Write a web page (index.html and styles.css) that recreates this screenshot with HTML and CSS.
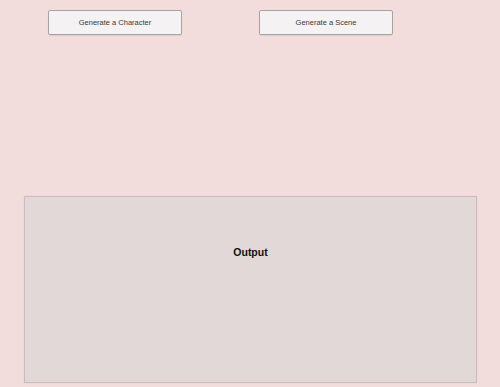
FILE: index.html
```html
<!DOCTYPE html>
<html lang="en">

<head>
    <meta charset="UTF-8">
    <meta name="viewport" content="width=device-width, initial-scale=1.0">
    <title>Generator</title>
    <link rel="stylesheet" href="styles.css">
</head>

<body>
    <div class="button-row">
        <button type="button" class="gen-btn">Generate a Character</button>
        <button type="button" class="gen-btn">Generate a Scene</button>
    </div>
    <div class="output-box">
        <h3 class="output-title">Output</h3>
    </div>
</body>

</html>
```

FILE: styles.css
```css
* {
    box-sizing: border-box;
}

body {
    margin: 0;
    padding: 0;
    height: 100vh;
    background-color: #f3dcdc;
    font-family: "Liberation Sans", Arial, sans-serif;
}

.button-row {
    display: flex;
    gap: 77px;
    padding: 10px 0 0 48px;
}

.gen-btn {
    width: 134px;
    height: 25px;
    background-color: #f4f2f2;
    border: 1px solid #a9a3a3;
    border-radius: 2px;
    box-shadow: 0 1px 1px rgba(0, 0, 0, 0.08);
    color: #3a3a3a;
    font-family: "Liberation Sans", Arial, sans-serif;
    font-size: 7.5px;
    padding: 0;
}

.output-box {
    width: 453px;
    height: 187px;
    margin: 161px 0 0 24px;
    background-color: #e3d8d8;
    border: 1px solid #cbbdbd;
    box-shadow: 0 0 1px rgba(0, 0, 0, 0.1);
    text-align: center;
    padding-top: 49px;
}

.output-title {
    margin: 0;
    font-size: 10.5px;
    font-weight: bold;
    color: #111;
}
```
